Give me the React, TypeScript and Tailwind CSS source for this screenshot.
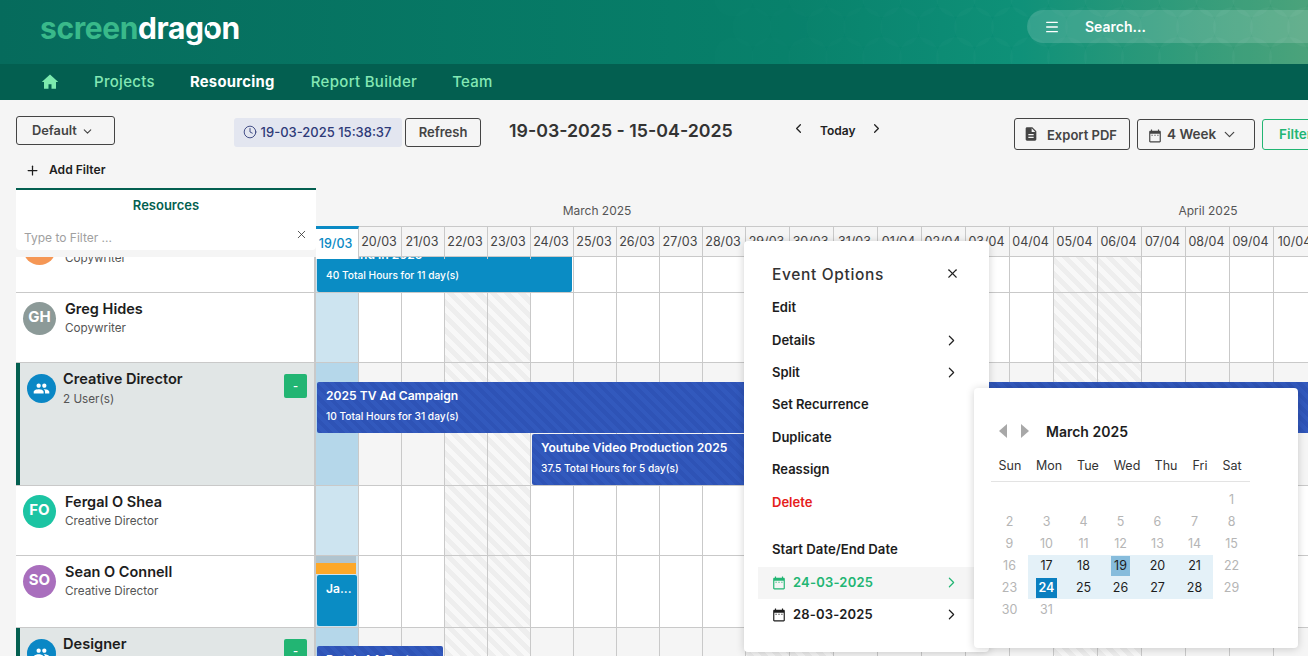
import { ChevronDown, ChevronLeft, ChevronRight, Clock, Menu, Plus, X } from "lucide-react";
import type { ReactNode } from "react";

const COLS = "grid grid-cols-[43px_repeat(9,43px)_repeat(13,44px)]";
const HATCH = "bg-[repeating-linear-gradient(45deg,#eeeeee_0,#eeeeee_5px,#f8f8f8_5px,#f8f8f8_10px)]";
const BLUE_BAR = "bg-[repeating-linear-gradient(45deg,#2e53b6_0,#2e53b6_4px,#3259bd_4px,#3259bd_8px)]";

const dates = [
  "19/03", "20/03", "21/03", "22/03", "23/03", "24/03", "25/03", "26/03", "27/03", "28/03", "29/03", "30/03",
  "31/03", "01/04", "02/04", "03/04", "04/04", "05/04", "06/04", "07/04", "08/04", "09/04", "10/04",
];
const weekend = [3, 4, 10, 11, 17, 18];

const weeks = [
  ["", "", "", "", "", "", "1"],
  ["2", "3", "4", "5", "6", "7", "8"],
  ["9", "10", "11", "12", "13", "14", "15"],
  ["16", "17", "18", "19", "20", "21", "22"],
  ["23", "24", "25", "26", "27", "28", "29"],
  ["30", "31", "", "", "", "", ""],
];

function CalIcon({ className }: { className: string }) {
  return (
    <svg viewBox="0 0 24 24" className={className} fill="currentColor">
      <path d="M20 3h-1V1h-2v2H7V1H5v2H4c-1.1 0-2 .9-2 2v16c0 1.1.9 2 2 2h16c1.1 0 2-.9 2-2V5c0-1.1-.9-2-2-2zm0 18H4V8h16v13z" />
      <path d="M6 10h2v1.500H6zM11 10h2v1.500h-2zM16 10h2v1.500h-2z" />
    </svg>
  );
}

function Person({ initials, color, name, role }: { initials: string; color: string; name: string; role: string }) {
  return (
    <div className="flex items-start pl-[7px] pt-[9px]">
      <div className={`flex h-[33px] w-[33px] shrink-0 items-center justify-center rounded-full pb-[3px] text-[15px] font-bold text-white ${color}`}>
        {initials}
      </div>
      <div className="ml-[9px] -mt-[2px]">
        <div className="text-[14.500px] font-semibold leading-[18px] text-[#1d1d1d]">{name}</div>
        <div className="mt-[2px] text-[11.700px] leading-[16px] text-[#555]">{role}</div>
      </div>
    </div>
  );
}

function Role({ name, count }: { name: string; count: string }) {
  return (
    <div className="flex h-full items-start border-l-4 border-[#035f50] pl-[7px] pt-[10px]">
      <div className="mt-[1px] flex h-[29px] w-[29px] shrink-0 items-center justify-center rounded-full bg-[#0a87c5] text-white">
        <svg viewBox="0 0 24 24" className="h-[17px] w-[17px]" fill="currentColor">
          <path d="M16 11c1.660 0 2.990-1.340 2.990-3S17.660 5 16 5c-1.660 0-3 1.340-3 3s1.340 3 3 3zm-8 0c1.660 0 2.990-1.340 2.990-3S9.660 5 8 5C6.340 5 5 6.340 5 8s1.340 3 3 3zm0 2c-2.330 0-7 1.170-7 3.500V19h14v-2.500c0-2.330-4.670-3.500-7-3.500zm8 0c-.290 0-.620.020-.970.050 1.160.840 1.970 1.970 1.970 3.450V19h6v-2.500c0-2.330-4.670-3.500-7-3.500z" />
        </svg>
      </div>
      <div className="ml-[7px] -mt-[3px] flex-1">
        <div className="text-[14.600px] font-semibold leading-[18px] text-[#1d1d1d]">{name}</div>
        <div className="mt-[3px] text-[11.700px] leading-[16px] text-[#555]">{count}</div>
      </div>
      <div className="mr-[7px] mt-[1px] flex h-[24px] w-[23px] items-center justify-center rounded-[2px] bg-[#22b573] text-[11px] font-semibold text-white">
        -
      </div>
    </div>
  );
}

function Row({ height, group, left, children }: { height: string; group?: boolean; left: ReactNode; children?: ReactNode }) {
  return (
    <div className={`flex border-b border-[#c9c9c9] ${height}`}>
      <div className={`w-[300px] shrink-0 border-r-2 border-[#c9c9c9] ${group ? "bg-[#e1e6e6]" : "bg-white"}`}>{left}</div>
      <div className="relative flex-1">
        <div className={`${COLS} h-full`}>
          {dates.map((d, i) => (
            <div
              key={d}
              className={`border-r border-[#c9c9c9] ${
                i === 0
                  ? group
                    ? "bg-[#b5d7ea]"
                    : "bg-[#cde4f0]"
                  : weekend.includes(i)
                    ? HATCH
                    : group
                      ? "bg-[#f5f5f5]"
                      : "bg-white"
              }`}
            />
          ))}
        </div>
        {children}
      </div>
    </div>
  );
}

function Bar({ className, title, sub }: { className: string; title: string; sub?: string }) {
  return (
    <div className={`absolute overflow-hidden whitespace-nowrap rounded-[2px] pl-[9px] text-white ${className}`}>
      <div className="pt-[6px] text-[12.100px] font-semibold leading-[16px]">{title}</div>
      {sub && <div className="mt-[5px] text-[10.200px] font-medium leading-[14px]">{sub}</div>}
    </div>
  );
}

function MenuItem({ label, arrow, className }: { label: string; arrow?: boolean; className?: string }) {
  return (
    <div className={`flex h-[32.400px] items-center pl-[28px] pr-[29px] text-[13px] font-semibold ${className ?? "text-[#1d1d1d]"}`}>
      <span className="flex-1">{label}</span>
      {arrow && <ChevronRight className="h-[17px] w-[17px] text-[#222]" strokeWidth={1.700} />}
    </div>
  );
}

function Calendar() {
  return (
    <div className="absolute left-[974px] top-[388px] z-30 h-[260px] w-[324px] rounded-[4px] bg-white pl-[17px] pt-[33px] shadow-[0_1px_8px_rgba(0,0,0,0.18)]">
      <div className="flex h-[20px] items-center pl-[8px]">
        <svg viewBox="0 0 8 14" className="h-[14px] w-[8px] fill-[#a8a8a8]"><path d="M8 0v14L0 7z" /></svg>
        <svg viewBox="0 0 8 14" className="ml-[14px] h-[14px] w-[8px] fill-[#a8a8a8]"><path d="M0 0v14l8-7z" /></svg>
        <span className="ml-[17px] text-[14px] font-semibold text-[#1d1d1d]">March 2025</span>
      </div>
      <div className="mt-[17px] grid w-[259px] grid-cols-[38px_40px_38px_40px_38px_30px_34px] border-b border-[#e3e3e3] pb-[7px] text-center text-[12.500px] leading-[16px] text-[#333]">
        {["Sun", "Mon", "Tue", "Wed", "Thu", "Fri", "Sat"].map((d) => (
          <span key={d}>{d}</span>
        ))}
      </div>
      <div className="mt-[7px] grid w-[259px] grid-cols-[repeat(7,37px)]">
        {weeks.flatMap((week, w) =>
          week.map((day, i) => {
            const inRange = (w === 3 || w === 4) && i > 0 && i < 6;
            return (
              <div
                key={`${w}-${i}`}
                className={`flex h-[22px] items-center justify-center text-[12.500px] ${inRange ? "bg-[#e4f1f8] text-[#1d1d1d]" : "text-[#b5b5b5]"}`}
              >
                {day === "19" ? (
                  <span className="flex h-[20px] w-[19px] items-center justify-center bg-[#86bcdc]">19</span>
                ) : day === "24" ? (
                  <span className="flex h-[20px] w-[21px] items-center justify-center bg-[#0a7fc0] font-semibold text-white">24</span>
                ) : (
                  day
                )}
              </div>
            );
          }),
        )}
      </div>
    </div>
  );
}

function EventOptions() {
  return (
    <div className="absolute left-[744px] top-[241px] z-20 h-[411px] w-[245px] rounded-[4px] bg-white shadow-[0_1px_8px_rgba(0,0,0,0.18)]">
      <div className="flex items-center pl-[28px] pr-[29px] pt-[22px] text-[15.500px] font-medium tracking-[0.65px] text-[#333]">
        <span className="flex-1">Event Options</span>
        <X className="-mt-[3px] h-[15px] w-[15px] text-[#222]" strokeWidth={1.700} />
      </div>
      <div className="mt-[5.500px]">
        <MenuItem label="Edit" />
        <MenuItem label="Details" arrow />
        <MenuItem label="Split" arrow />
        <MenuItem label="Set Recurrence" />
        <MenuItem label="Duplicate" />
        <MenuItem label="Reassign" />
        <MenuItem label="Delete" className="text-[#e5201c]" />
      </div>
      <div className="mt-[22.500px] pl-[28px] text-[13.200px] font-semibold leading-[16px] text-[#1d1d1d]">Start Date/End Date</div>
      <div className="mt-[10px] ml-[14px] flex h-[32px] items-center bg-[#f5f5f5] pl-[14px] pr-[29px] text-[13px] font-semibold tracking-[0.2px] text-[#22b573]">
        <CalIcon className="mr-[7px] h-[14px] w-[14px]" />
        <span className="flex-1">24-03-2025</span>
        <ChevronRight className="h-[17px] w-[17px]" strokeWidth={1.700} />
      </div>
      <div className="ml-[14px] flex h-[32px] items-center pl-[14px] pr-[29px] text-[13px] font-semibold tracking-[0.2px] text-[#1d1d1d]">
        <CalIcon className="mr-[7px] h-[14px] w-[14px]" />
        <span className="flex-1">28-03-2025</span>
        <ChevronRight className="h-[17px] w-[17px]" strokeWidth={1.700} />
      </div>
    </div>
  );
}

function HeaderPattern() {
  const circles = [];
  for (let r = 0; r < 3; r++) {
    for (let c = 0; c < 18; c++) {
      const x = 660 + c * 37 + (r % 2 ? 18 : 0);
      const y = -3 + r * 30;
      circles.push(<circle key={`${r}-${c}`} cx={x} cy={y} r={20} fill="#ffffff" opacity={0.006 * (c / 3 + 0.5)} />);
    }
  }
  return (
    <svg className="absolute inset-0 h-[64px] w-[1308px]" viewBox="0 0 1308 64">
      {circles}
    </svg>
  );
}

export default function App() {
  return (
    <div className="relative h-[656px] w-[1308px] overflow-hidden bg-[#f5f5f5] font-['Inter',sans-serif]">
      {/* top header */}
      <div className="relative flex h-[64px] items-start justify-between bg-[linear-gradient(90deg,#066b5c_0%,#07806a_60%,#0a8f76_78%,#45a077_100%)]">
        <HeaderPattern />
        <div className="relative ml-[40px] mt-[8px] text-[30px] font-bold leading-[40px] tracking-[-0.4px]">
          <span className="text-[#39b98a]">screen</span>
          <span className="text-white">dragon</span>
          <span className="absolute left-[167px] top-[17px] h-[6px] w-[3px] rounded-[1px] bg-[#0a7a66]" />
        </div>
        <div className="relative mt-[10px] flex h-[33px] w-[281px] items-center rounded-l-full bg-white/15">
          <Menu className="ml-[17px] h-[16px] w-[16px] text-white" strokeWidth={2} />
          <span className="ml-[25px] text-[14px] font-semibold text-white">Search...</span>
        </div>
      </div>

      {/* nav */}
      <div className="flex h-[36px] items-center bg-[#035f50] text-[15px] font-medium tracking-[0.3px] text-[#84e8b4]">
        <svg viewBox="0 0 24 24" className="ml-[41px] h-[18px] w-[18px]" fill="#7ceaae">
          <path d="M10 21v-6h4v6h6v-9h3L12 2 1 12h3v9z" />
        </svg>
        <span className="ml-[35px]">Projects</span>
        <span className="ml-[35px] text-[14.800px] font-bold text-white">Resourcing</span>
        <span className="ml-[36px]">Report Builder</span>
        <span className="ml-[35px]">Team</span>
      </div>

      {/* toolbar */}
      <div className="flex h-[60px] items-start pl-[16px] pt-[16px]">
        <button className="flex h-[29px] w-[99px] shrink-0 items-center rounded-[3px] border border-[#444] pl-[15px] pt-[1px] text-[12.800px] font-semibold text-[#444]">
          Default
          <ChevronDown className="ml-[4px] h-[13px] w-[13px]" />
        </button>
        <div className="ml-[119px] mt-[2px] flex h-[29px] w-[168px] shrink-0 items-center justify-center rounded-[3px] bg-[#e3e6f0] pt-[1px] text-[13px] font-medium text-[#2e3a78]">
          <Clock className="mr-[4px] -ml-[2px] -mt-[3px] h-[14px] w-[14px]" strokeWidth={1.500} />
          19-03-2025 15:38:37
        </div>
        <button className="ml-[3px] mt-[2px] h-[29px] w-[76px] shrink-0 rounded-[3px] border border-[#444] pt-[1px] text-[13px] font-semibold text-[#444]">Refresh</button>
        <div className="ml-[28px] mt-[3px] w-[224px] shrink-0 whitespace-nowrap text-[17.800px] font-semibold leading-[24px] text-[#333]">19-03-2025 - 15-04-2025</div>
        <ChevronLeft className="ml-[58px] mt-[5px] h-[15px] w-[15px] shrink-0 text-[#222]" strokeWidth={2} />
        <span className="ml-[14px] mt-[8px] w-[35px] shrink-0 text-[12px] font-semibold leading-[14px] text-[#222]">Today</span>
        <ChevronRight className="ml-[14px] mt-[5px] h-[15px] w-[15px] shrink-0 text-[#222]" strokeWidth={2} />
        <button className="ml-[130px] mt-[2px] flex h-[32px] w-[116px] shrink-0 items-center rounded-[3px] border border-[#444] pl-[8px] pt-[3px] text-[13px] font-semibold text-[#444]">
          <svg viewBox="0 0 24 24" className="-mt-[3px] mr-[8px] h-[16px] w-[16px]" fill="#444">
            <path d="M14 2H6c-1.100 0-2 .9-2 2v16c0 1.100.9 2 2 2h12c1.100 0 2-.9 2-2V8l-6-6zm2 16H8v-2h8v2zm0-4H8v-2h8v2zm-3-5V3.500L18.500 9H13z" />
          </svg>
          Export PDF
        </button>
        <button className="ml-[7px] mt-[3px] flex h-[31px] w-[118px] shrink-0 items-center rounded-[3px] border border-[#444] pl-[10px] text-[13.500px] font-semibold text-[#444]">
          <CalIcon className="mr-[5px] mt-[3px] h-[14px] w-[14px]" />
          4 Week
          <ChevronDown className="ml-[5px] h-[17px] w-[17px]" strokeWidth={1.700} />
        </button>
        <button className="ml-[7px] mt-[3px] h-[31px] w-[80px] shrink-0 rounded-[3px] border border-[#22b573] pl-[16px] text-left text-[13.500px] font-semibold text-[#22b573]">Filter</button>
      </div>

      {/* add filter */}
      <div className="flex h-[20px] items-center pl-[25px] text-[12.100px] font-semibold text-[#1d1d1d]">
        <Plus className="mr-[9px] h-[15px] w-[15px]" strokeWidth={2} />
        Add Filter
      </div>

      {/* scheduler */}
      <div className="mt-[8px] pl-[16px]">
        <div className="relative z-10 flex h-[69px]">
          <div className="h-full w-[300px] shrink-0 bg-[#f5f5f5]">
            <div className="flex h-[62px] flex-col rounded-b-[4px] border-t-2 border-[#035f50] bg-white">
              <div className="pt-[7px] text-center text-[13px] font-semibold leading-[16px] text-[#035f50]">Resources</div>
              <div className="mt-[16px] flex items-center pl-[8px] pr-[8px] text-[12px] text-[#a0a0a0]">
                <span className="flex-1">Type to Filter ...</span>
                <X className="-mt-[8px] h-[13px] w-[13px] text-[#333]" strokeWidth={1.500} />
              </div>
            </div>
          </div>
          <div className="flex-1 bg-[#f5f5f5]">
            <div className="flex h-[38px] pt-[15px] text-[12px] leading-[16px] text-[#555]">
              <span className="w-[562px] shrink-0 text-center">March 2025</span>
              <span className="w-[660px] shrink-0 text-center">April 2025</span>
            </div>
            <div className={`${COLS} h-[31px] border-y border-[#c9c9c9] text-center text-[12.500px] leading-[29px] text-[#444]`}>
              {dates.map((d, i) => (
                <div
                  key={d}
                  className={
                    i === 0
                      ? "-mt-px border-t-[3px] border-r border-[#0a8ac4] border-r-[#c9c9c9] bg-white pr-[3px] font-medium leading-[30px] text-[#0a8ac4]"
                      : "border-r border-[#c9c9c9] pr-[2px]"
                  }
                >
                  {d}
                </div>
              ))}
            </div>
          </div>
        </div>

        <div className="-mt-[34px]">
          <Row height="h-[70px]" left={<Person initials="JM" color="bg-[#f59755]" name="Niamh Walsh" role="Copywriter" />}>
            <Bar className="left-[1px] top-[18px] h-[51px] w-[255px] bg-[#0a8cc4]" title="Rebrand in 2025" sub="40 Total Hours for 11 day(s)" />
          </Row>
          <Row height="h-[70px]" left={<Person initials="GH" color="bg-[#8c9a98]" name="Greg Hides" role="Copywriter" />} />
          <Row height="h-[123px]" group left={<Role name="Creative Director" count="2 User(s)" />}>
            <Bar className={`left-[1px] top-[19px] h-[51px] w-[1100px] ${BLUE_BAR}`} title="2025 TV Ad Campaign" sub="10 Total Hours for 31 day(s)" />
            <Bar className={`left-[216px] top-[71px] h-[51px] w-[300px] ${BLUE_BAR}`} title="Youtube Video Production 2025" sub="37.5 Total Hours for 5 day(s)" />
          </Row>
          <Row height="h-[70px]" left={<Person initials="FO" color="bg-[#1cc4a3]" name="Fergal O Shea" role="Creative Director" />} />
          <Row height="h-[72px]" left={<Person initials="SO" color="bg-[#a96fbd]" name="Sean O Connell" role="Creative Director" />}>
            <div className="absolute left-0 top-0 h-[7px] w-[40px] bg-[#b0c4cf]" />
            <div className="absolute left-0 top-[7px] h-[11px] w-[40px] bg-[#fda829]" />
            <Bar className="left-[1px] top-[19px] h-[51px] w-[40px] bg-[#0a8cc4]" title="Ja..." />
          </Row>
          <Row height="h-[70px]" group left={<Role name="Designer" count="3 User(s)" />}>
            <Bar className={`left-[1px] top-[18px] h-[51px] w-[126px] ${BLUE_BAR}`} title="Dutch AA Test" />
          </Row>
        </div>
      </div>

      <EventOptions />
      <Calendar />
    </div>
  );
}
